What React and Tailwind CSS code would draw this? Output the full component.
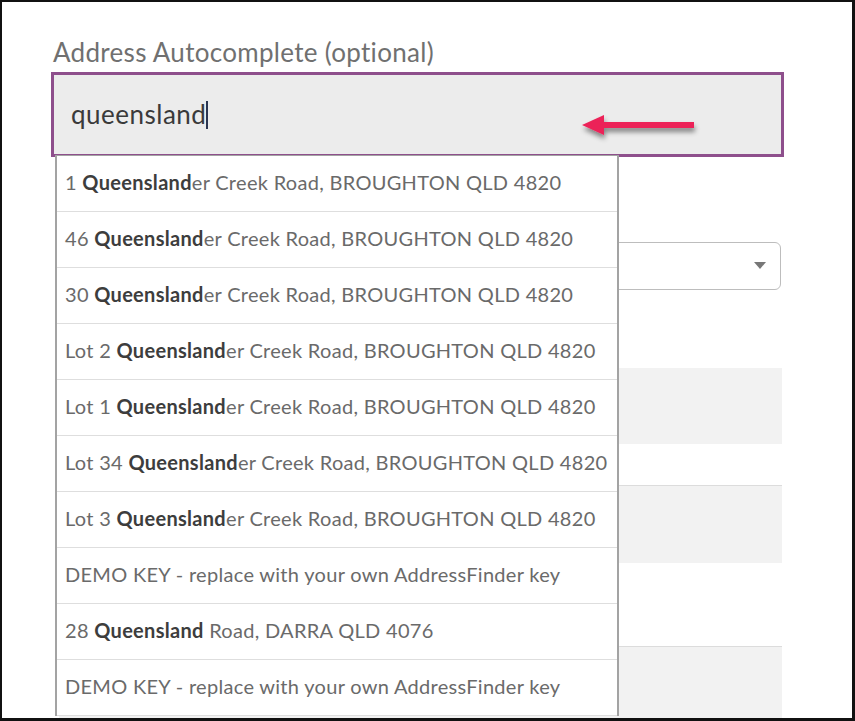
import React from "react";

const items = [
  { pre: "1 ", bold: "Queensland", post: "er Creek Road, BROUGHTON QLD 4820" },
  { pre: "46 ", bold: "Queensland", post: "er Creek Road, BROUGHTON QLD 4820" },
  { pre: "30 ", bold: "Queensland", post: "er Creek Road, BROUGHTON QLD 4820" },
  { pre: "Lot 2 ", bold: "Queensland", post: "er Creek Road, BROUGHTON QLD 4820" },
  { pre: "Lot 1 ", bold: "Queensland", post: "er Creek Road, BROUGHTON QLD 4820" },
  { pre: "Lot 34 ", bold: "Queensland", post: "er Creek Road, BROUGHTON QLD 4820" },
  { pre: "Lot 3 ", bold: "Queensland", post: "er Creek Road, BROUGHTON QLD 4820" },
  { pre: "DEMO KEY - replace with your own AddressFinder key", bold: "", post: "" },
  { pre: "28 ", bold: "Queensland", post: " Road, DARRA QLD 4076" },
  { pre: "DEMO KEY - replace with your own AddressFinder key", bold: "", post: "" },
];

export default function App() {
  return (
    <div
      className="relative w-[855px] h-[721px] bg-white border-2 border-r-[3px] border-b-[3px] border-[#111] overflow-hidden"
      style={{ fontFamily: "Lato, 'Open Sans', sans-serif" }}
    >
      <div className="pl-[49px] pt-[35px] flex flex-col">
        <div className="text-[26px] leading-[31px] tracking-[0.3px] text-[#707070] mb-[4px] pl-[2px]">
          Address Autocomplete (optional)
        </div>
        <div className="w-[733px] h-[85px] border-[3px] border-[#8e4f8c] bg-[#ececec] flex items-center pl-[17px]">
          <span className="text-[26px] tracking-[0.5px] text-[#3a3a3a]">queensland</span>
          <span className="w-[2px] h-[28px] bg-[#2b3550]"></span>
        </div>
        <div className="mt-[85px] ml-[8px] w-[722px] h-[48px] border border-[#bdbdbd] rounded-[6px] flex items-center justify-end pr-[14px]">
          <svg width="12" height="8" viewBox="0 0 12 8">
            <polygon points="0,0 12,0 6,7" fill="#777" />
          </svg>
        </div>
        <div className="mt-[78px] ml-[8px] w-[723px] h-[76px] bg-[#f2f2f2]"></div>
        <div className="mt-[41px] ml-[8px] w-[723px] h-[78px] bg-[#f2f2f2] border-t border-[#dcdcdc]"></div>
        <div className="mt-[83px] ml-[8px] w-[723px] h-[80px] bg-[#f2f2f2] border-t border-[#dcdcdc]"></div>
      </div>

      <div className="absolute left-[53px] top-[153px] w-[564px] bg-white border-l-2 border-r-2 border-t border-[#a3a3a3]">
        {items.map((it, i) => (
          <div
            key={i}
            className="h-[56px] border-b border-[#dedede] flex items-center pl-[8px] pb-[3px] text-[20px] tracking-[0.3px] text-[#6a6a6a] whitespace-nowrap"
          >
            <span>
              {it.pre}
              {it.bold && <b className="font-bold text-[#3d3d3d]">{it.bold}</b>}
              {it.post}
            </span>
          </div>
        ))}
      </div>

      <svg
        className="absolute left-[578px] top-[106px]"
        width="124"
        height="40"
        viewBox="0 0 124 40"
      >
        <defs>
          <filter id="sh" x="-20%" y="-50%" width="140%" height="200%">
            <feDropShadow dx="1" dy="4" stdDeviation="2.5" floodColor="#000" floodOpacity="0.45" />
          </filter>
        </defs>
        <g filter="url(#sh)">
          <rect x="20" y="14" width="94" height="6" fill="#ec2459" />
          <polygon points="2,17 24,7 24,27" fill="#ec2459" />
        </g>
      </svg>
    </div>
  );
}
